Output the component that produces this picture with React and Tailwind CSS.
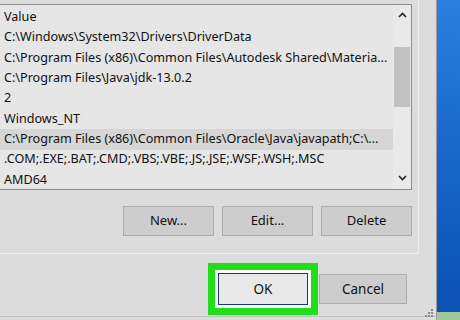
import React from 'react';

const rows = [
    'Value',
    'C:\\Windows\\System32\\Drivers\\DriverData',
    'C:\\Program Files (x86)\\Common Files\\Autodesk Shared\\Materia...',
    'C:\\Program Files\\Java\\jdk-13.0.2',
    '2',
    'Windows_NT',
    'C:\\Program Files (x86)\\Common Files\\Oracle\\Java\\javapath;C:\\...',
    '.COM;.EXE;.BAT;.CMD;.VBS;.VBE;.JS;.JSE;.WSF;.WSH;.MSC',
    'AMD64',
];

function Chevron({ down }) {
    return (
        <svg width="9" height="6" viewBox="0 0 9 6">
            <path
                d={down ? 'M1 1 L4.5 4.5 L8 1' : 'M1 5 L4.5 1.5 L8 5'}
                fill="none"
                stroke="#222"
                strokeWidth="1.6"
            />
        </svg>
    );
}

export default function App() {
    return (
        <div className="flex w-[460px] h-[320px] overflow-hidden text-[#111]" style={{ fontFamily: '"Noto Sans", "Open Sans", sans-serif' }}>
            <div className="relative flex flex-col w-[437px] h-full bg-[#dcdcdc] border-r border-[#9a9a9a]">
                <div className="w-[419px] h-[254px] pt-[4px] border-r border-b border-[#efefef]">
                    <div className="flex w-[413px] h-[186px] -ml-[1px] bg-[#e6e6e6] border border-[#8c8c8c]">
                        <div className="flex-1 pt-[2px] overflow-hidden">
                            {rows.map((r, i) => (
                                <div
                                    key={i}
                                    className={'h-[20.4px] pl-[4px] flex items-center whitespace-nowrap text-[12.6px] ' + (i === 6 ? 'bg-[#d6d6d6]' : '')}
                                >
                                    {r}
                                </div>
                            ))}
                        </div>
                        <div className="w-[18px] flex flex-col items-center bg-[#e9e9e9]">
                            <div className="h-[20px] flex items-center justify-center"><Chevron /></div>
                            <div className="mt-[22px] w-[16px] h-[60px] bg-[#c2c2c2]" />
                            <div className="flex-1" />
                            <div className="h-[22px] flex items-center justify-center"><Chevron down /></div>
                        </div>
                    </div>
                    <div className="flex justify-end gap-[8px] pr-[6px] mt-[16px]">
                        {['New...', 'Edit...', 'Delete'].map((b) => (
                            <div key={b} className="w-[91px] h-[30px] flex items-center justify-center bg-[#cdcdcd] border border-[#adadad] text-[13px]">
                                {b}
                            </div>
                        ))}
                    </div>
                </div>
                <div className="flex items-start mt-[9px]">
                    <div className="ml-[208px] w-[110px] h-[52px] border-[7px] border-[#22dd1a] bg-white p-[3px]">
                        <div className="w-full h-full flex items-center justify-center bg-[#e9e9e9] border-[1.5px] border-[#0c3d75] text-[13.5px]">
                            OK
                        </div>
                    </div>
                    <div className="ml-[1px] mt-[11px] w-[88px] h-[30px] flex items-center justify-center bg-[#cdcdcd] border border-[#adadad] text-[13.5px]">
                        Cancel
                    </div>
                </div>
                <div className="flex-1" />
                <div className="h-[4px] border-t border-[#c4c4c4]" />
                <svg className="absolute right-[2px] bottom-[2px]" width="10" height="10" viewBox="0 0 10 10">
                    <rect x="7" y="1" width="2" height="2" fill="#8a8a8a" />
                    <rect x="4" y="4" width="2" height="2" fill="#8a8a8a" />
                    <rect x="7" y="4" width="2" height="2" fill="#8a8a8a" />
                    <rect x="1" y="7" width="2" height="2" fill="#8a8a8a" />
                    <rect x="4" y="7" width="2" height="2" fill="#8a8a8a" />
                    <rect x="7" y="7" width="2" height="2" fill="#8a8a8a" />
                </svg>
            </div>
            <div className="flex-1 flex flex-col bg-gradient-to-b from-[#2a80de] via-[#1766c8] to-[#0b4fb2]">
                <div className="flex-1" />
                <div className="h-[8px] bg-[#9fc79a]" />
            </div>
        </div>
    );
}
